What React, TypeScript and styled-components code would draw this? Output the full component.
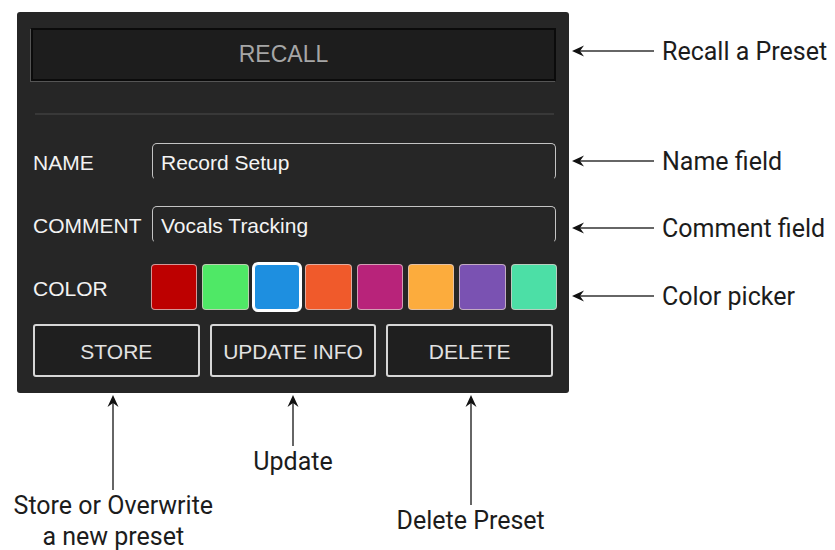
import styled, { createGlobalStyle } from "styled-components";

const GlobalStyle = createGlobalStyle`
    html, body {
        margin: 0;
        padding: 0;
        background: #ffffff;
    }
    body {
        font-family: Roboto, "Liberation Sans", sans-serif;
    }
`;

type Swatch = {
    color: string;
    selected?: boolean;
};

const swatches: Swatch[] = [
    { color: '#bd0000' },
    { color: '#4fe866' },
    { color: '#1e8fe0', selected: true },
    { color: '#f05a2b' },
    { color: '#b8237a' },
    { color: '#fcac3d' },
    { color: '#7a52b2' },
    { color: '#4cdfa6' },
];

type SideNote = {
    text: string;
    top: number;
};

const sideNotes: SideNote[] = [
    { text: 'Recall a Preset', top: 24 },
    { text: 'Name field', top: 80 },
    { text: 'Comment field', top: 37 },
    { text: 'Color picker', top: 38 },
];

type BottomNote = {
    lines: string[];
    arrow: number;
    shift: number;
};

const bottomNotes: BottomNote[] = [
    { lines: ['Store or Overwrite', 'a new preset'], arrow: 95, shift: -3 },
    { lines: ['Update'], arrow: 51, shift: 0 },
    { lines: ['Delete Preset'], arrow: 110, shift: 1 },
];

function LeftArrow() {
    return (
        <svg width="82" height="12" viewBox="0 0 82 12">
            <line x1="6" y1="6" x2="82" y2="6" stroke="#333" strokeWidth="1.5" />
            <polygon points="0,6 12,0.5 8,6 12,11.5" fill="#111" />
        </svg>
    );
}

function UpArrow({ length }: { length: number }) {
    return (
        <svg width="12" height={length} viewBox={`0 0 12 ${length}`}>
            <line x1="6" y1="6" x2="6" y2={length} stroke="#333" strokeWidth="1.5" />
            <polygon points="6,0 11.5,12 6,8 0.5,12" fill="#111" />
        </svg>
    );
}

export default function App() {
    return (
        <>
            <GlobalStyle />
            <Page>
                <Top>
                    <Panel>
                        <RecallButton>RECALL</RecallButton>
                        <Divider />
                        <FieldRow>
                            <Label>NAME</Label>
                            <TextField>Record Setup</TextField>
                        </FieldRow>
                        <FieldRow $gap={26}>
                            <Label>COMMENT</Label>
                            <TextField>Vocals Tracking</TextField>
                        </FieldRow>
                        <FieldRow $gap={21}>
                            <Label>COLOR</Label>
                            <Swatches>
                                {swatches.map((s, i) => (
                                    <ColorChip key={i} $color={s.color} $selected={s.selected} />
                                ))}
                            </Swatches>
                        </FieldRow>
                        <ButtonRow>
                            <ActionButton>STORE</ActionButton>
                            <ActionButton>UPDATE INFO</ActionButton>
                            <ActionButton>DELETE</ActionButton>
                        </ButtonRow>
                    </Panel>
                    <SideNotes>
                        {sideNotes.map((n, i) => (
                            <SideCallout key={i} $top={n.top}>
                                <LeftArrow />
                                <NoteText>{n.text}</NoteText>
                            </SideCallout>
                        ))}
                    </SideNotes>
                </Top>
                <BottomNotes>
                    {bottomNotes.map((n, i) => (
                        <BottomCallout key={i} $shift={n.shift}>
                            <UpArrow length={n.arrow} />
                            <NoteText>
                                {n.lines.map((l, j) => (
                                    <div key={j}>{l}</div>
                                ))}
                            </NoteText>
                        </BottomCallout>
                    ))}
                </BottomNotes>
            </Page>
        </>
    );
}

const Page = styled.div`
    width: 835px;
    height: 550px;
    box-sizing: border-box;
    padding: 12px 0 0 17px;
    overflow: hidden;
`;

const Top = styled.div`
    display: flex;
    align-items: flex-start;
`;

const Panel = styled.div`
    width: 552px;
    box-sizing: border-box;
    background: #262626;
    border-radius: 3px;
    padding: 16px 13px 16px 14px;
    display: flex;
    flex-direction: column;
    font-family: "Liberation Sans", Arial, sans-serif;
`;

const RecallButton = styled.div`
    height: 53px;
    box-sizing: border-box;
    display: flex;
    align-items: center;
    justify-content: center;
    padding-right: 20px;
    background: #1d1d1d;
    border: 2px solid #0b0b0b;
    box-shadow: -1px 1px 0 #555;
    color: #a6a6a6;
    font-size: 23px;
`;

const Divider = styled.div`
    height: 2px;
    margin: 32px 2px 0 4px;
    background: #383838;
`;

const FieldRow = styled.div<{ $gap?: number }>`
    display: flex;
    align-items: center;
    margin-top: ${p => p.$gap ?? 28}px;
    padding-left: 2px;
`;

const Label = styled.div`
    width: 119px;
    flex-shrink: 0;
    padding-top: 3px;
    color: #f2f2f2;
    font-size: 21px;
`;

const TextField = styled.div`
    flex: 1;
    height: 37px;
    box-sizing: border-box;
    display: flex;
    align-items: center;
    padding: 3px 0 0 8px;
    border: 1px solid #c4c4c4;
    border-bottom-color: transparent;
    border-radius: 5px;
    color: #f4f4f4;
    font-size: 21px;
`;

const Swatches = styled.div`
    flex: 1;
    display: grid;
    grid-template-columns: repeat(8, 1fr);
    gap: 5px;
    margin-left: -1px;
    margin-right: -1px;
`;

const ColorChip = styled.div<{ $color: string; $selected?: boolean }>`
    height: 46px;
    box-sizing: border-box;
    border-radius: 4px;
    background: ${p => p.$color};
    border: 1px solid ${p => (p.$selected ? '#ffffff' : 'rgba(220, 200, 200, 0.75)')};
    box-shadow: ${p => (p.$selected ? '0 0 0 2px #ffffff' : 'none')};
`;

const ButtonRow = styled.div`
    display: grid;
    grid-template-columns: repeat(3, 1fr);
    gap: 10px;
    margin-top: 14px;
    padding: 0 3px 0 2px;
`;

const ActionButton = styled.div`
    height: 53px;
    box-sizing: border-box;
    display: flex;
    align-items: center;
    justify-content: center;
    padding-top: 2px;
    background: #1f1f1f;
    border: 2px solid #d6d6d6;
    border-radius: 3px;
    color: #e2e2e2;
    font-size: 21px;
`;

const SideNotes = styled.div`
    display: flex;
    flex-direction: column;
    margin-left: 3px;
`;

const SideCallout = styled.div<{ $top: number }>`
    display: flex;
    align-items: center;
    gap: 8px;
    height: 30px;
    margin-top: ${p => p.$top}px;
`;

const NoteText = styled.div`
    font-family: Roboto, "Liberation Sans", sans-serif;
    font-size: 25px;
    line-height: 31px;
    color: #1c1c1c;
    text-align: center;
    white-space: nowrap;
`;

const BottomNotes = styled.div`
    display: grid;
    grid-template-columns: repeat(3, minmax(0, 1fr));
    gap: 10px;
    width: 520px;
    margin: 2px 0 0 16px;
`;

const BottomCallout = styled.div<{ $shift: number }>`
    display: flex;
    flex-direction: column;
    align-items: center;
    min-width: 0;
    position: relative;
    left: ${p => p.$shift}px;
    & > svg {
        flex-shrink: 0;
        margin-bottom: 0;
    }
`;
